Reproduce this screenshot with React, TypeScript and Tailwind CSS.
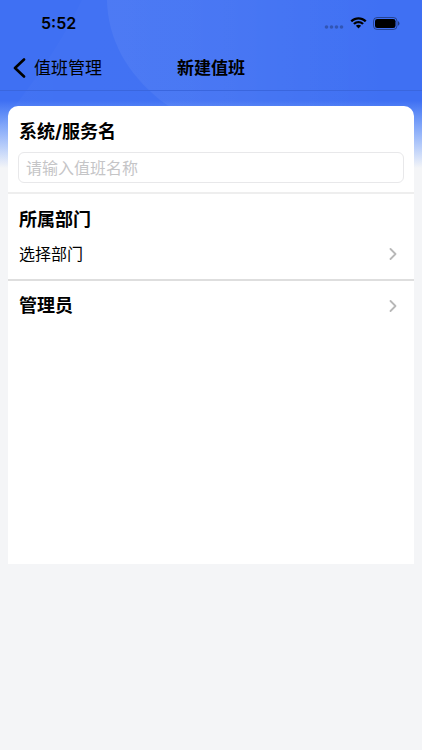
import { ChevronRight } from 'lucide-react';

const fontStack = "font-['Inter','Noto_Sans_CJK_SC',sans-serif]";

function Backdrop() {
  return (
    <div
      aria-hidden="true"
      className="absolute inset-x-0 top-0 h-[168px] overflow-hidden bg-linear-to-b from-[#3f70f3] from-60% to-[#f4f5f7]"
    >
      <svg
        viewBox="0 0 422 168"
        preserveAspectRatio="none"
        className="h-full w-full"
      >
        <defs>
          <linearGradient id="orb" x1="0" y1="0" x2="1" y2="0">
            <stop offset="0" stopColor="#fff" stopOpacity="0.06" />
            <stop offset="0.4" stopColor="#fff" stopOpacity="0.04" />
            <stop offset="0.9" stopColor="#fff" stopOpacity="0" />
          </linearGradient>
          <linearGradient id="haze" x1="0" y1="0" x2="1" y2="0">
            <stop offset="0" stopColor="#fff" stopOpacity="0.02" />
            <stop offset="1" stopColor="#fff" stopOpacity="0" />
          </linearGradient>
        </defs>
        <path
          d="M82 0C58 50 28 90 0 125V168H422V0Z"
          fill="url(#haze)"
        />
        <path
          d="M107 0C108 40 127 73 160 100C172 109 185 116 200 120H422V0Z"
          fill="url(#orb)"
        />
      </svg>
    </div>
  );
}

function StatusBar() {
  return (
    <div className="flex h-[46px] items-center justify-between pr-[22px] pl-[41px]">
      <span className="text-[16px] leading-5 font-semibold">5:52</span>
      <div className="flex items-center gap-[6px]">
        <svg width="20" height="4" viewBox="0 0 20 4" className="mt-2">
          <g fill="#000" opacity="0.25">
            <circle cx="2.5" cy="2" r="1.8" />
            <circle cx="7.5" cy="2" r="1.8" />
            <circle cx="12.5" cy="2" r="1.8" />
            <circle cx="17.5" cy="2" r="1.8" />
          </g>
        </svg>
        <svg width="17" height="12" viewBox="0 0 17 12" fill="#000">
          <path d="M8.5 2.5c2.4 0 4.6.9 6.2 2.5.1.1.3.1.4 0l1.2-1.2c.1-.1.1-.4 0-.5C12.1-.8 4.9-.8.7 3.3c-.1.1-.1.4 0 .5l1.2 1.2c.1.1.3.1.4 0C3.9 3.4 6.1 2.5 8.5 2.5z" />
          <path d="M8.5 6.3c1.3 0 2.5.5 3.5 1.3.1.1.3.1.4 0l1.2-1.2c.2-.1.2-.4 0-.5-2.9-2.7-7.3-2.7-10.2 0-.2.1-.2.4 0 .5l1.2 1.2c.1.1.3.1.4 0 1-.8 2.2-1.3 3.5-1.3z" />
          <path d="M10.9 9c.1-.1.1-.3 0-.4-1.4-1.2-3.4-1.2-4.8 0-.1.1-.1.3 0 .4l2.2 2.3c.1.1.3.1.4 0z" />
        </svg>
        <svg width="27" height="13" viewBox="0 0 27 13">
          <rect
            x="0.5"
            y="0.5"
            width="23.5"
            height="12"
            rx="3.6"
            fill="none"
            stroke="#000"
            strokeOpacity="0.4"
          />
          <rect x="2" y="2" width="20.5" height="9" rx="2.3" />
          <path d="M25 4.3v4.4c.9-.4 1.5-1.2 1.5-2.2S25.9 4.7 25 4.3z" fillOpacity="0.45" />
        </svg>
      </div>
    </div>
  );
}

function NavBar() {
  return (
    <nav className="grid h-[45px] grid-cols-[1fr_auto_1fr] items-center border-b border-[#3a66de] px-3">
      <button type="button" className="flex items-center gap-2 text-[17px] leading-6">
        <svg width="14" height="20" viewBox="0 0 14 20" fill="none">
          <path
            d="M12 1.5L3 10l9 8.5"
            stroke="#000"
            strokeWidth="2.6"
            strokeLinecap="round"
            strokeLinejoin="round"
          />
        </svg>
        值班管理
      </button>
      <h1 className="text-[17px] leading-6 font-bold">新建值班</h1>
    </nav>
  );
}

function RowArrow() {
  return <ChevronRight size={20} strokeWidth={2.2} className="text-[#b8b8b8]" />;
}

export default function App() {
  return (
    <div className={`relative min-h-screen bg-[#f4f5f7] text-black ${fontStack}`}>
      <Backdrop />
      <header className="relative">
        <StatusBar />
        <NavBar />
      </header>

      <main className="relative px-2 pt-[15px]">
        <form className="min-h-[458px] rounded-t-[10px] bg-white">
          <div className="border-b-2 border-[#eeeeee] px-[10px] pt-3 pb-[9px]">
            <label
              htmlFor="service-name"
              className="block pl-px text-[18px] leading-7 font-bold"
            >
              系统/服务名
            </label>
            <input
              id="service-name"
              type="text"
              placeholder="请输入值班名称"
              className="mt-[6px] block h-[31px] w-full rounded-md border border-[#e8e8ea] px-[7px] text-[16px] outline-none placeholder:text-[#c5c5c7]"
            />
          </div>

          <div className="border-b-2 border-[#dedede] px-[11px] pt-3 pb-[11px]">
            <h2 className="text-[18px] leading-7 font-bold">所属部门</h2>
            <button
              type="button"
              className="mt-[6px] flex h-7 w-full items-center justify-between text-[16px]"
            >
              选择部门
              <RowArrow />
            </button>
          </div>

          <button
            type="button"
            className="flex w-full items-center justify-between px-[11px] py-[11px] text-[18px] leading-7 font-bold"
          >
            管理员
            <RowArrow />
          </button>
        </form>
      </main>
    </div>
  );
}
